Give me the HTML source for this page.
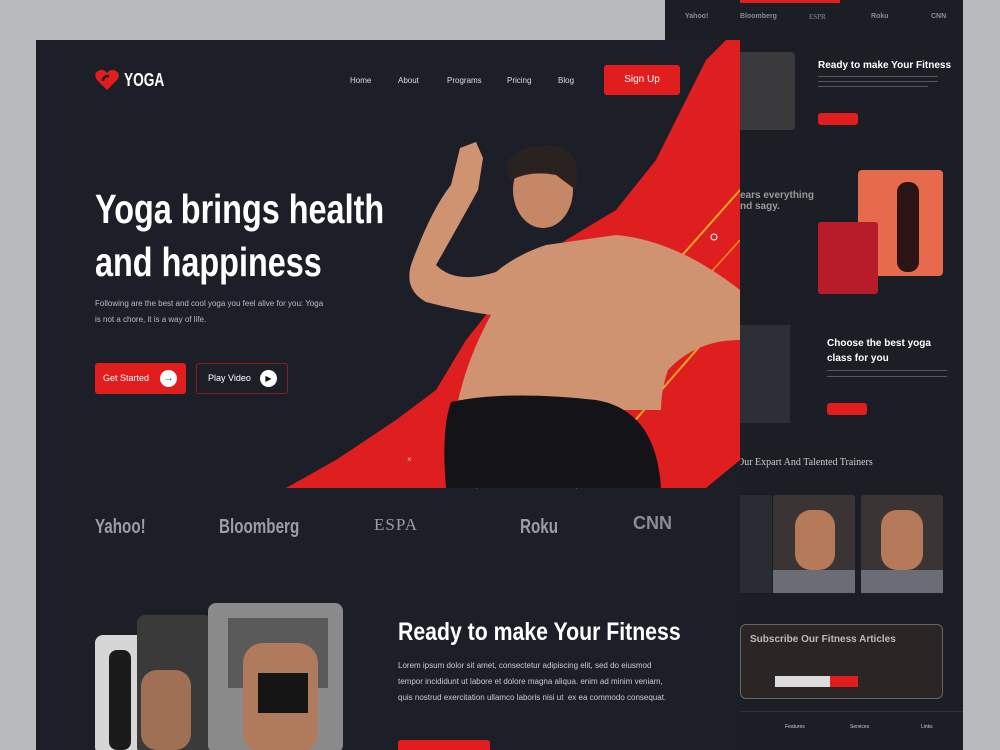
<!DOCTYPE html>
<html><head><meta charset="utf-8"><style>
*{margin:0;padding:0;box-sizing:border-box}
body{width:1000px;height:750px;overflow:hidden;background:#b9babe;position:relative;font-family:"Liberation Sans",sans-serif}
.cond{font-family:"Liberation Sans",sans-serif;font-weight:bold;transform:scaleX(0.76);transform-origin:0 0;white-space:nowrap}
.abs{position:absolute}
#back{left:665px;top:0;width:298px;height:750px;background:#1c1e25;overflow:hidden}
#front{left:36px;top:40px;width:704px;height:710px;background:#1d1f28;overflow:hidden}
.t{color:#fff}
.nav a{position:absolute;top:36px;font-size:8px;color:#ddd}
.btn{position:absolute;background:#e21d1d;border-radius:3px;color:#fff}
.line{position:absolute;height:2px;background:#555862;border-radius:1px}
</style></head><body>
<div id="back" class="abs">
 <div class="abs" style="left:20px;top:13px;width:280px;font-size:7px;color:#8a8c95;font-weight:bold">
  <span class="abs" style="left:0">Yahoo!</span><span class="abs" style="left:55px">Bloomberg</span><span class="abs" style="left:124px;font-family:'Liberation Serif',serif;font-weight:normal">ESPR</span><span class="abs" style="left:186px">Roku</span><span class="abs" style="left:246px">CNN</span></div>
 <div class="abs" style="left:75px;top:0;width:100px;height:3px;background:#e21d1d"></div>
 <div class="abs" style="left:70px;top:52px;width:60px;height:78px;background:#3a3a3c;border-radius:4px"></div>
 <div class="abs t" style="left:153px;top:60px;font-size:10px;font-weight:bold">Ready to make Your Fitness</div>
 <div class="line" style="left:153px;top:76px;width:120px;height:1px"></div><div class="line" style="left:153px;top:81px;width:120px;height:1px"></div><div class="line" style="left:153px;top:86px;width:110px;height:1px"></div>
 <div class="btn" style="left:153px;top:113px;width:40px;height:12px"></div>
 <div class="abs" style="left:75px;top:190px;font-size:10px;font-weight:bold;color:#999">ears everything<br>nd sagy.</div>
 <div class="abs" style="left:193px;top:170px;width:85px;height:106px;background:#e86a4d;border-radius:4px"></div>
 <div class="abs" style="left:232px;top:182px;width:22px;height:90px;background:#2a1414;border-radius:10px"></div>
 <div class="abs" style="left:153px;top:222px;width:60px;height:72px;background:#b81c2a;border-radius:3px"></div>
 <div class="abs" style="left:75px;top:325px;width:50px;height:98px;background:#2c3036"></div>
 <div class="abs t" style="left:162px;top:336px;font-size:10px;font-weight:bold;line-height:15px">Choose the best yoga<br>class for you</div>
 <div class="line" style="left:162px;top:370px;width:120px;height:1px"></div><div class="line" style="left:162px;top:376px;width:120px;height:1px"></div>
 <div class="btn" style="left:162px;top:403px;width:40px;height:12px"></div>
 <div class="abs" style="left:72px;top:457px;font-size:10px;color:#ccc;font-family:'Liberation Serif',serif">Our Expart And Talented Trainers</div>
 <div class="abs" style="left:75px;top:495px;width:32px;height:98px;background:#2a2c33"></div>
 <div class="abs" style="left:108px;top:495px;width:82px;height:98px;background:#3a3534;border-radius:3px"></div>
 <div class="abs" style="left:130px;top:510px;width:40px;height:60px;background:#b47a5a;border-radius:16px"></div>
 <div class="abs" style="left:196px;top:495px;width:82px;height:98px;background:#3a3534;border-radius:3px"></div>
 <div class="abs" style="left:216px;top:510px;width:42px;height:60px;background:#b47a5a;border-radius:16px"></div>
 <div class="abs" style="left:108px;top:570px;width:82px;height:23px;background:#6a6d75"></div>
 <div class="abs" style="left:196px;top:570px;width:82px;height:23px;background:#6a6d75"></div>
 <div class="abs" style="left:75px;top:624px;width:203px;height:75px;background:#2b2526;border:1px solid #666;border-radius:6px"></div>
 <div class="abs" style="left:85px;top:634px;font-size:10px;font-weight:bold;color:#bbb">Subscribe Our Fitness Articles</div>
 <div class="abs" style="left:110px;top:676px;width:55px;height:11px;background:#ddd"></div>
 <div class="btn" style="left:165px;top:676px;width:28px;height:11px;border-radius:0"></div>
 <div class="abs" style="left:75px;top:711px;width:223px;height:1px;background:#333"></div>
 <div class="abs" style="left:120px;top:724px;font-size:5px;color:#ccc">Features</div><div class="abs" style="left:185px;top:724px;font-size:5px;color:#ccc">Services</div><div class="abs" style="left:256px;top:724px;font-size:5px;color:#ccc">Links</div>
</div>
<div id="front" class="abs">
 <svg class="abs" style="left:0;top:0" width="704" height="710">
  <polygon points="690,0 704,0 704,420 670,448 250,448 300,420 360,380 400,350 430,300 470,250 530,200 580,170 620,120 650,60 670,20" fill="#df1f1f"/>
  <line x1="440" y1="448" x2="704" y2="150" stroke="#f5a623" stroke-width="2"/>
  <line x1="540" y1="448" x2="704" y2="260" stroke="#f5a623" stroke-width="2"/>
  <line x1="560" y1="360" x2="704" y2="200" stroke="#ff8a1a" stroke-width="1.5"/>
  <circle cx="678" cy="197" r="3" fill="none" stroke="#fff"/>
  <circle cx="429" cy="340" r="3" fill="none" stroke="#e21d1d"/>
  <text x="681" y="294" fill="#fff" font-size="12" font-weight="bold">×</text>
  <text x="371" y="422" fill="#ccc" font-size="8">×</text>
  <path d="M424,108 L440,102 L447,118 L442,150 Q420,190 400,225 Q420,245 460,232 Q480,215 510,205 L580,195 Q640,200 704,250 L704,300 Q660,300 632,330 Q625,350 625,370 L420,370 Q430,320 455,275 Q420,270 390,262 Q368,250 375,225 Q395,170 415,145 Z" fill="#cf9371"/>
  <ellipse cx="507" cy="150" rx="30" ry="38" fill="#c58766"/>
  <path d="M470,125 Q480,103 520,106 Q548,115 540,150 L520,135 Q495,130 475,140 Z" fill="#2a2220"/>
  <path d="M415,362 Q470,350 560,360 Q620,370 625,448 L410,448 Q405,390 415,362Z" fill="#141418"/>
 </svg>
 <svg class="abs" style="left:59px;top:29px" width="24" height="22" viewBox="0 0 24 22"><path d="M12,21 L2,11 Q-2,5 3,2 Q8,-1 12,4 Q16,-1 21,2 Q26,5 22,11Z" fill="#e21d1d"/><path d="M8,12 Q8,7 14,7" stroke="#1d1f28" stroke-width="2.5" fill="none"/></svg>
 <div class="abs t cond" style="left:88px;top:30px;font-size:18px">YOGA</div>
 <div class="nav"><a style="left:314px">Home</a><a style="left:362px">About</a><a style="left:411px">Programs</a><a style="left:471px">Pricing</a><a style="left:522px">Blog</a></div>
 <div class="btn" style="left:568px;top:25px;width:76px;height:30px;font-size:10px;text-align:center;line-height:30px">Sign Up</div>
 <div class="abs t cond" style="left:59px;top:143px;font-size:41px;line-height:53px;transform:scaleX(0.79)">Yoga brings health<br>and happiness</div>
 <div class="abs" style="left:59px;top:256px;font-size:8px;color:#bbb;line-height:16px">Following are the best and cool yoga you feel alive for you: Yoga<br>is not a chore, it is a way of life.</div>
 <div class="btn" style="left:59px;top:323px;width:91px;height:31px;font-size:9px;line-height:31px;padding-left:8px">Get Started<span class="abs" style="right:9px;top:7px;width:17px;height:17px;border-radius:50%;background:#fff;color:#333;line-height:17px;text-align:center;font-size:10px">→</span></div>
 <div class="abs" style="left:160px;top:323px;width:92px;height:31px;border:1px solid #8a1c1c;border-radius:3px;color:#fff;font-size:9px;line-height:29px;padding-left:11px">Play Video<span class="abs" style="right:10px;top:6px;width:17px;height:17px;border-radius:50%;background:#fff;color:#111;line-height:17px;text-align:center;font-size:8px">▶</span></div>
 <div class="abs cond" style="left:59px;top:476px;font-size:20px;color:#9a9ca6">Yahoo!</div>
 <div class="abs cond" style="left:183px;top:476px;font-size:20px;color:#9a9ca6">Bloomberg</div>
 <div class="abs" style="left:338px;top:475px;font-size:17px;color:#9a9ca6;font-family:'Liberation Serif',serif;letter-spacing:1px">ESPA</div>
 <div class="abs cond" style="left:484px;top:476px;font-size:20px;color:#9a9ca6">Roku</div>
 <div class="abs" style="left:597px;top:473px;font-size:18px;color:#8a8c96;font-weight:900">CNN</div>
 <div class="abs" style="left:59px;top:595px;width:50px;height:120px;background:#d6d6d6;border-radius:8px"></div>
 <div class="abs" style="left:73px;top:610px;width:22px;height:100px;background:#1a1a1a;border-radius:8px"></div>
 <div class="abs" style="left:101px;top:575px;width:75px;height:140px;background:#3a3a3a;border-radius:8px"></div>
 <div class="abs" style="left:105px;top:630px;width:50px;height:80px;background:#a07055;border-radius:16px"></div>
 <div class="abs" style="left:172px;top:563px;width:135px;height:150px;background:#8a8a8a;border-radius:8px;overflow:hidden">
  <div class="abs" style="left:20px;top:15px;width:100px;height:70px;background:#5a5a5a"></div>
  <div class="abs" style="left:35px;top:40px;width:75px;height:110px;background:#b07a5c;border-radius:20px"></div>
  <div class="abs" style="left:50px;top:70px;width:50px;height:40px;background:#151515"></div></div>
 <div class="abs t cond" style="left:362px;top:578px;font-size:25px;transform:scaleX(0.85)">Ready to make Your Fitness</div>
 <div class="abs" style="left:362px;top:618px;font-size:8px;color:#ccc;line-height:16px">Lorem ipsum dolor sit amet, consectetur adipiscing elit, sed do eiusmod<br>tempor incididunt ut labore et dolore magna aliqua. enim ad minim veniam,<br>quis nostrud exercitation ullamco laboris nisi ut &nbsp;ex ea commodo consequat.</div>
 <div class="btn" style="left:362px;top:700px;width:92px;height:20px"></div>
</div>
</body></html>
